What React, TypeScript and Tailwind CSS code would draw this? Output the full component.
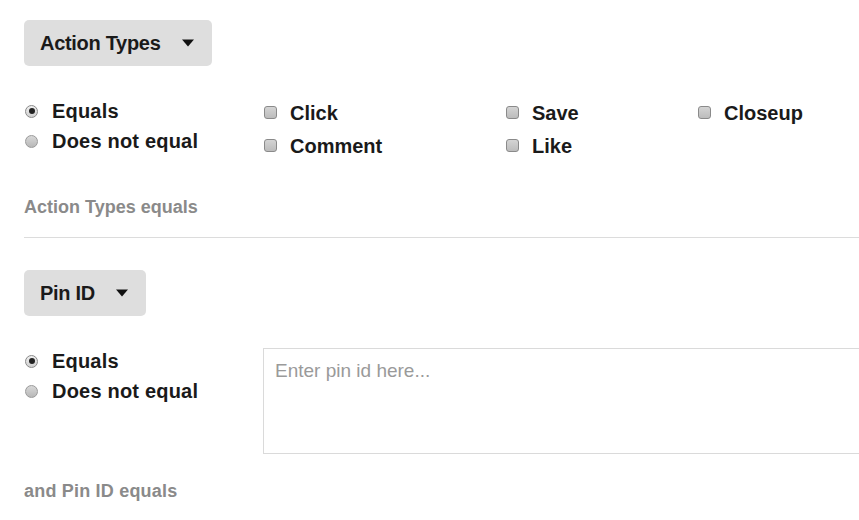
import React from "react";

const font = { fontFamily: '"Liberation Sans", Arial, sans-serif' };

function Caret() {
  return (
    <svg width="12" height="8" viewBox="0 0 12 8" className="ml-[21px]">
      <path d="M0 0.5 H12 L6 7.5 Z" fill="#111" />
    </svg>
  );
}

function Dropdown({ label }: { label: string }) {
  return (
    <div className="flex">
      <button className="flex h-[46px] items-center rounded-[5px] bg-[#dedede] pl-[16px] pr-[18px] text-[20px] font-bold tracking-[-0.3px] text-[#1a1a1a]">
        {label}
        <Caret />
      </button>
    </div>
  );
}

function Radio({ checked, label }: { checked?: boolean; label: string }) {
  return (
    <label className="flex h-[30px] items-center">
      <span
        className={
          checked
            ? "flex h-[13px] w-[13px] items-center justify-center rounded-full border border-[#8a8a8a] bg-gradient-to-b from-[#f0f0f0] to-[#d0d0d0]"
            : "h-[13px] w-[13px] rounded-full border border-[#9a9a9a] bg-gradient-to-b from-[#d8d8d8] to-[#b8b8b8]"
        }
      >
        {checked && <span className="h-[6px] w-[6px] rounded-full bg-[#222]" />}
      </span>
      <span className="ml-[14px] text-[20px] font-bold tracking-[0.2px] text-[#1a1a1a]">{label}</span>
    </label>
  );
}

function Check({ label }: { label: string }) {
  return (
    <label className="flex h-[33px] items-center">
      <span className="h-[13px] w-[13px] rounded-[3px] border border-[#8a8a8a] bg-gradient-to-b from-[#d4d4d4] to-[#bcbcbc]" />
      <span className="ml-[13px] text-[20px] font-bold text-[#1a1a1a]">{label}</span>
    </label>
  );
}

export default function App() {
  return (
    <div className="h-[520px] w-full overflow-hidden bg-white" style={font}>
      <div className="w-[900px] pl-[24px] pt-[20px]">
        <Dropdown label="Action Types" />
        <div className="mt-[30px] flex">
          <div className="w-[240px] pl-[1px]">
            <Radio checked label="Equals" />
            <Radio label="Does not equal" />
          </div>
          <div className="grid grid-flow-col grid-rows-2 grid-cols-[242px_192px_200px]">
            <Check label="Click" />
            <Check label="Comment" />
            <Check label="Save" />
            <Check label="Like" />
            <Check label="Closeup" />
          </div>
        </div>
        <div className="mt-[33px] h-[24px] text-[18px] font-bold leading-[24px] text-[#8a8a8a]">
          Action Types equals
        </div>
        <div className="mt-[18px] h-px bg-[#dcdcdc]" />
        <div className="mt-[32px]">
          <Dropdown label="Pin ID" />
        </div>
        <div className="mt-[30px] flex">
          <div className="w-[239px] pl-[1px]">
            <Radio checked label="Equals" />
            <Radio label="Does not equal" />
          </div>
          <div className="mt-[2px] h-[106px] flex-1 border border-[#dadada] px-[11px] pt-[10px] text-[19px] leading-[24px] text-[#9a9a9a]">
            Enter pin id here...
          </div>
        </div>
        <div className="mt-[25px] h-[24px] text-[18px] font-bold leading-[24px] tracking-[0.2px] text-[#8a8a8a]">
          and Pin ID equals
        </div>
      </div>
    </div>
  );
}
